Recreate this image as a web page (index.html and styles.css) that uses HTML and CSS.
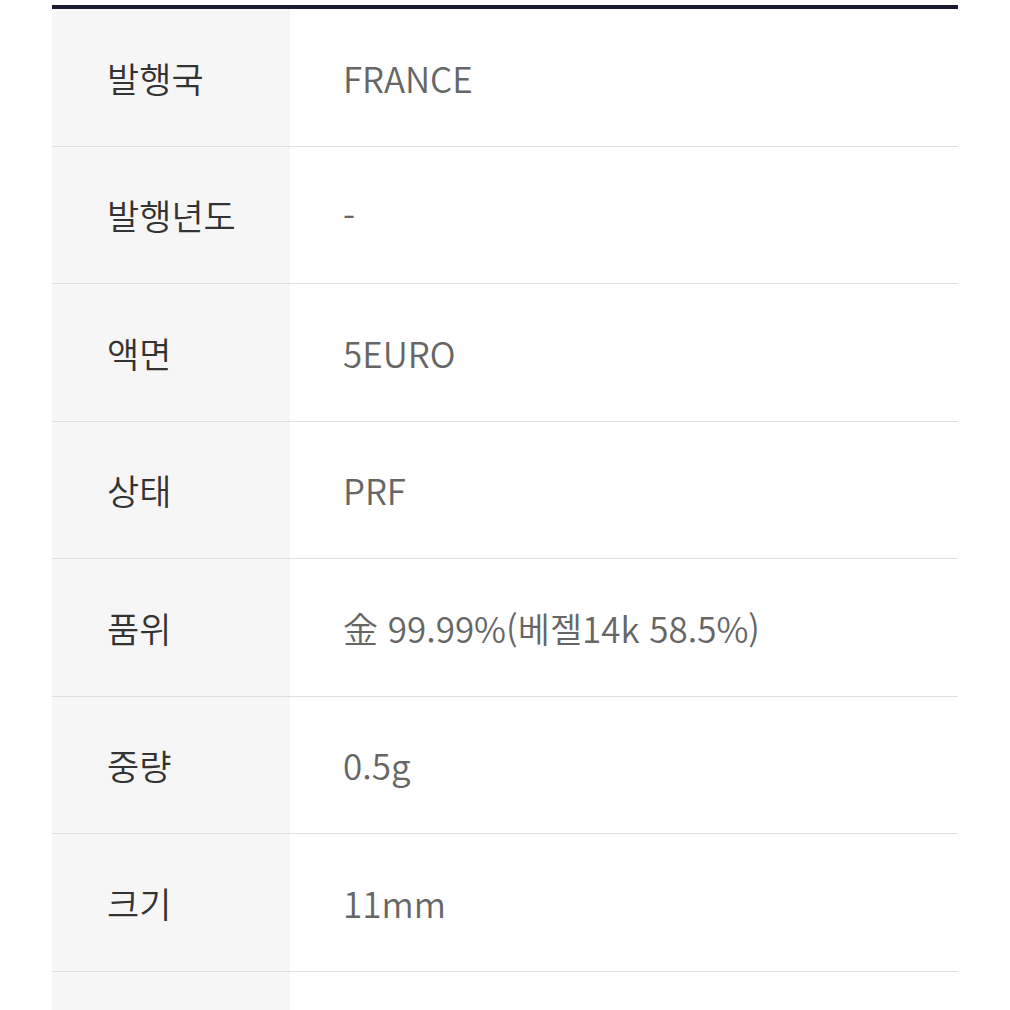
FILE: index.html
```html
<!DOCTYPE html>
<html lang="ko">
<head>
<meta charset="utf-8">
<link rel="stylesheet" href="styles.css">
</head>
<body>
<div class="spec">
  <div class="row"><div class="label">발행국</div><div class="value">FRANCE</div></div>
  <div class="row"><div class="label">발행년도</div><div class="value">-</div></div>
  <div class="row"><div class="label">액면</div><div class="value">5EURO</div></div>
  <div class="row"><div class="label">상태</div><div class="value">PRF</div></div>
  <div class="row"><div class="label">품위</div><div class="value">金 99.99%(베젤14k 58.5%)</div></div>
  <div class="row"><div class="label">중량</div><div class="value">0.5g</div></div>
  <div class="row"><div class="label">크기</div><div class="value">11mm</div></div>
  <div class="row"><div class="label"></div><div class="value"></div></div>
</div>
</body>
</html>
```
FILE: styles.css
```css
html, body {
  margin: 0;
  padding: 0;
  background: #fff;
}
body {
  box-sizing: border-box;
  padding: 5px 52px 0 52px;
  font-family: "Noto Sans CJK KR", "Noto Sans", sans-serif;
  font-weight: 350;
  width: 1010px;
  height: 1010px;
  overflow: hidden;
}
.spec {
  border-top: 4px solid #1b1a33;
}
.row {
  display: flex;
  height: 136.5px;
  border-bottom: 1px solid #dedede;
}
.label {
  width: 238px;
  flex: none;
  background: #f6f6f6;
  display: flex;
  align-items: center;
  padding-left: 55px;
  box-sizing: border-box;
  font-size: 35px;
  color: #333;
}
.value {
  flex: 1;
  display: flex;
  align-items: center;
  padding-left: 53px;
  font-size: 35px;
  color: #666;
}
```
